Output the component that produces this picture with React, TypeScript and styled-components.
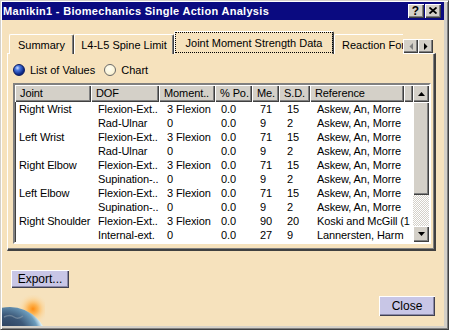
import React from 'react'
import styled, { createGlobalStyle } from 'styled-components'

const GlobalStyle = createGlobalStyle`
	html, body {
		margin: 0;
		padding: 0;
		background: #d4d0c8;
	}
	body {
		font-family: 'Liberation Sans', Arial, sans-serif;
		font-size: 11px;
		color: #000;
	}
`

const beige = '#f6e2bd'
const raised = 'inset 1px 1px #fff, inset -1px -1px #404040, inset -2px -2px #808080'

const Window = styled.div`
	width: 449px;
	height: 330px;
	box-sizing: border-box;
	display: flex;
	flex-direction: column;
	border: 1px solid;
	border-color: #d4d0c8 #404040 #404040 #d4d0c8;
	padding: 1px 4px 3px 1px;
	background: #d4d0c8;
	box-shadow: inset 1px 1px #fff, inset -1px -1px #808080;
`

const TitleBar = styled.div`
	height: 18px;
	flex: none;
	display: flex;
	align-items: center;
	background: #0a0a80;
	padding: 0 3px 0 1px;
`

const TitleText = styled.div`
	flex: 1;
	color: #fff;
	font-weight: bold;
	font-size: 11px;
	letter-spacing: 0.3px;
	white-space: nowrap;
`

const TitleButtons = styled.div`
	display: flex;
	gap: 1px;
`

const TitleButton = styled.div`
	width: 16px;
	height: 14px;
	box-sizing: border-box;
	background: #d4d0c8;
	box-shadow: ${raised};
	display: flex;
	align-items: center;
	justify-content: center;
	font-weight: bold;
	font-size: 12px;
	line-height: 1;
	padding: 0 1px 1px 0;
`

const Body = styled.div`
	flex: 1;
	display: flex;
	flex-direction: column;
	background: ${beige};
	padding-top: 11px;
`

const TabStrip = styled.div`
	display: flex;
	align-items: flex-end;
	height: 22px;
	padding-left: 7px;
	width: 431px;
	position: relative;
	z-index: 1;
`

const TabViewport = styled.div`
	width: 394px;
	height: 23px;
	overflow: hidden;
	display: flex;
	align-items: flex-end;
	align-self: flex-start;
`

const Tab = styled.div<{ $w: number; $selected?: boolean }>`
	flex: none;
	width: ${p => p.$w}px;
	height: ${p => (p.$selected ? 23 : 20)}px;
	box-sizing: border-box;
	display: flex;
	align-items: center;
	justify-content: center;
	white-space: nowrap;
	background: ${beige};
	border-top: 1px solid #fff;
	border-left: 1px solid #fff;
	border-right: 1px solid #404040;
	border-radius: 2px 2px 0 0;
	box-shadow: inset -1px 0 #808080;
	padding-bottom: ${p => (p.$selected ? 1 : 0)}px;
	outline: ${p => (p.$selected ? '1px dotted #000' : 'none')};
	outline-offset: -2px;
`

const Arrows = styled.div`
	display: flex;
	align-self: flex-end;
`

const ArrowButton = styled.div`
	width: 15px;
	height: 14px;
	background: #d4d0c8;
	box-shadow: ${raised};
	display: flex;
	align-items: center;
	justify-content: center;
`

const Panel = styled.div`
	margin-left: 5px;
	width: 429px;
	height: 198px;
	box-sizing: border-box;
	border-top: 1px solid #fff;
	border-left: 1px solid #fff;
	border-right: 2px solid #404040;
	border-bottom: 2px solid #404040;
	box-shadow: inset -1px -1px #808080;
	padding: 10px 0 0 5px;
	display: flex;
	flex-direction: column;
	gap: 8px;
`

const RadioRow = styled.div`
	display: flex;
	align-items: center;
	height: 11px;
`

const RadioLabel = styled.label`
	display: flex;
	align-items: center;
	gap: 5px;
	margin-right: 9px;
	white-space: nowrap;
`

const RadioDot = styled.span<{ $on?: boolean }>`
	width: 12px;
	height: 12px;
	border-radius: 50%;
	box-sizing: border-box;
	background: ${p =>
		p.$on
			? 'radial-gradient(circle at 35% 30%, #cfe0ff 0, #4a78e0 25%, #0e2c8c 65%, #061650 100%)'
			: 'radial-gradient(circle at 40% 35%, #fffef4 0, #fbf4d8 60%, #e8dcb0 100%)'};
	border: 1px solid ${p => (p.$on ? '#0a1a60' : '#6a6a6a')};
`

const ListBox = styled.div`
	width: 418px;
	height: 161px;
	box-sizing: border-box;
	border: 2px solid;
	border-color: #808080 #fff #fff #808080;
	box-shadow: inset 1px 1px #404040;
	background: #fff;
	display: flex;
	letter-spacing: -0.1px;
`

const Table = styled.div`
	width: 398px;
	display: flex;
	flex-direction: column;
`

const cols = '76px 68px 56px 37px 27px 31px 94px 9px'

const HeaderRow = styled.div`
	display: grid;
	grid-template-columns: ${cols};
	height: 17px;
`

const HeaderCell = styled.div`
	background: #d4d0c8;
	box-shadow: ${raised};
	padding-left: 5px;
	line-height: 16px;
	white-space: nowrap;
	overflow: hidden;
`

const DataRow = styled.div`
	display: grid;
	grid-template-columns: ${cols};
	height: 14px;
	line-height: 14px;
`

const Cell = styled.div<{ $pad: number; $span?: number }>`
	padding-left: ${p => p.$pad}px;
	grid-column: span ${p => p.$span ?? 1};
	white-space: nowrap;
	overflow: hidden;
`

const ScrollBar = styled.div`
	width: 16px;
	display: flex;
	flex-direction: column;
`

const ScrollButton = styled.div<{ $h: number }>`
	height: ${p => p.$h}px;
	background: #d4d0c8;
	box-shadow: ${raised};
	display: flex;
	align-items: center;
	justify-content: center;
`

const Thumb = styled.div`
	height: 93px;
	background: #d4d0c8;
	box-shadow: ${raised};
`

const Track = styled.div`
	flex: 1;
	background: repeating-conic-gradient(#d4d0c8 0 25%, #fff 0 50%) 0 0 / 2px 2px;
`

const PushButton = styled.div<{ $w: number; $h: number }>`
	width: ${p => p.$w}px;
	height: ${p => p.$h}px;
	box-sizing: border-box;
	background: #c8c6e6;
	box-shadow: inset 1px 1px #fff, inset -1px -1px #404050, inset -2px -2px #8a88a8;
	display: flex;
	align-items: center;
	justify-content: center;
	font-size: 12px;
`

const ExportRow = styled.div`
	margin: 19px 0 0 9px;
`

const Footer = styled.div`
	margin-top: 7px;
	height: 31px;
	display: flex;
	justify-content: space-between;
	align-items: flex-start;
	padding-right: 9px;
`

const CloseWrap = styled.div`
	margin-top: 1px;
`

const rows = [
	['Right Wrist', 'Flexion-Ext..', '3 Flexion', '0.0', '71', '15', 'Askew, An, Morre'],
	['', 'Rad-Ulnar', '0', '0.0', '9', '2', 'Askew, An, Morre'],
	['Left Wrist', 'Flexion-Ext..', '3 Flexion', '0.0', '71', '15', 'Askew, An, Morre'],
	['', 'Rad-Ulnar', '0', '0.0', '9', '2', 'Askew, An, Morre'],
	['Right Elbow', 'Flexion-Ext..', '3 Flexion', '0.0', '71', '15', 'Askew, An, Morre'],
	['', 'Supination-..', '0', '0.0', '9', '2', 'Askew, An, Morre'],
	['Left Elbow', 'Flexion-Ext..', '3 Flexion', '0.0', '71', '15', 'Askew, An, Morre'],
	['', 'Supination-..', '0', '0.0', '9', '2', 'Askew, An, Morre'],
	['Right Shoulder', 'Flexion-Ext..', '3 Flexion', '0.0', '90', '20', 'Koski and McGill (1'],
	['', 'Internal-ext.', '0', '0.0', '27', '9', 'Lannersten, Harm'],
]

const headers = ['Joint', 'DOF', 'Moment..', '% Po.', 'Me.', 'S.D.', 'Reference', '']
const cellPad = [4, 7, 8, 6, 8, 8, 7]

function Globe() {
	return (
		<svg width='43' height='31' viewBox='0 0 43 31'>
			<defs>
				<radialGradient id='glow' cx='31' cy='14' r='16' gradientUnits='userSpaceOnUse'>
					<stop offset='0' stopColor='#ff8c10' stopOpacity='1' />
					<stop offset='0.3' stopColor='#ffa838' stopOpacity='0.8' />
					<stop offset='0.65' stopColor='#ffc878' stopOpacity='0.35' />
					<stop offset='1' stopColor={beige} stopOpacity='0' />
				</radialGradient>
				<radialGradient id='earth' cx='2' cy='44' r='40' gradientUnits='userSpaceOnUse'>
					<stop offset='0' stopColor='#22304a' />
					<stop offset='0.6' stopColor='#3c5878' />
					<stop offset='0.88' stopColor='#6c9cbc' />
					<stop offset='1' stopColor='#d8eef6' />
				</radialGradient>
			</defs>
			<rect width='43' height='31' fill='url(#glow)' />
			<circle cx='8' cy='50' r='38' fill='url(#earth)' />
			<path d='M2 22 q6 -3 10 0 q4 3 9 -1' stroke='#8a9cac' strokeWidth='1.5' fill='none' opacity='0.6' />
		</svg>
	)
}

export default function App() {
	return (
		<>
			<GlobalStyle />
			<Window>
				<TitleBar>
					<TitleText>Manikin1 - Biomechanics Single Action Analysis</TitleText>
					<TitleButtons>
						<TitleButton>?</TitleButton>
						<TitleButton>
							<svg width='8' height='7' viewBox='0 0 8 7'>
								<path d='M0.5 0.5 L7.5 6.5 M7.5 0.5 L0.5 6.5' stroke='#000' strokeWidth='1.8' />
							</svg>
						</TitleButton>
					</TitleButtons>
				</TitleBar>
				<Body>
					<TabStrip>
						<TabViewport>
							<Tab $w={65}>Summary</Tab>
							<Tab $w={100}>L4-L5 Spine Limit</Tab>
							<Tab $w={160} $selected>
								Joint Moment Strength Data
							</Tab>
							<Tab $w={96}>Reaction Forces</Tab>
						</TabViewport>
						<Arrows>
							<ArrowButton>
								<svg width='4' height='7' viewBox='0 0 4 7'>
									<path d='M4 0 L0.5 3.5 L4 7 Z' fill='#808080' />
								</svg>
							</ArrowButton>
							<ArrowButton>
								<svg width='4' height='7' viewBox='0 0 4 7'>
									<path d='M0 0 L3.5 3.5 L0 7 Z' fill='#000' />
								</svg>
							</ArrowButton>
						</Arrows>
					</TabStrip>
					<Panel>
						<RadioRow>
							<RadioLabel>
								<RadioDot $on />
								List of Values
							</RadioLabel>
							<RadioLabel>
								<RadioDot />
								Chart
							</RadioLabel>
						</RadioRow>
						<ListBox>
							<Table>
								<HeaderRow>
									{headers.map((h, i) => (
										<HeaderCell key={i}>{h}</HeaderCell>
									))}
								</HeaderRow>
								{rows.map((r, i) => (
									<DataRow key={i}>
										{r.map((c, j) => (
											<Cell key={j} $pad={cellPad[j]} $span={j === 6 ? 2 : 1}>
												{c}
											</Cell>
										))}
									</DataRow>
								))}
							</Table>
							<ScrollBar>
								<ScrollButton $h={17}>
									<svg width='7' height='4' viewBox='0 0 7 4'>
										<path d='M0 4 L3.5 0 L7 4 Z' fill='#000' />
									</svg>
								</ScrollButton>
								<Thumb />
								<Track />
								<ScrollButton $h={16}>
									<svg width='7' height='4' viewBox='0 0 7 4'>
										<path d='M0 0 L3.5 4 L7 0 Z' fill='#000' />
									</svg>
								</ScrollButton>
							</ScrollBar>
						</ListBox>
					</Panel>
					<ExportRow>
						<PushButton $w={58} $h={18}>
							Export...
						</PushButton>
					</ExportRow>
					<Footer>
						<Globe />
						<CloseWrap>
							<PushButton $w={56} $h={20}>
								Close
							</PushButton>
						</CloseWrap>
					</Footer>
				</Body>
			</Window>
		</>
	)
}
